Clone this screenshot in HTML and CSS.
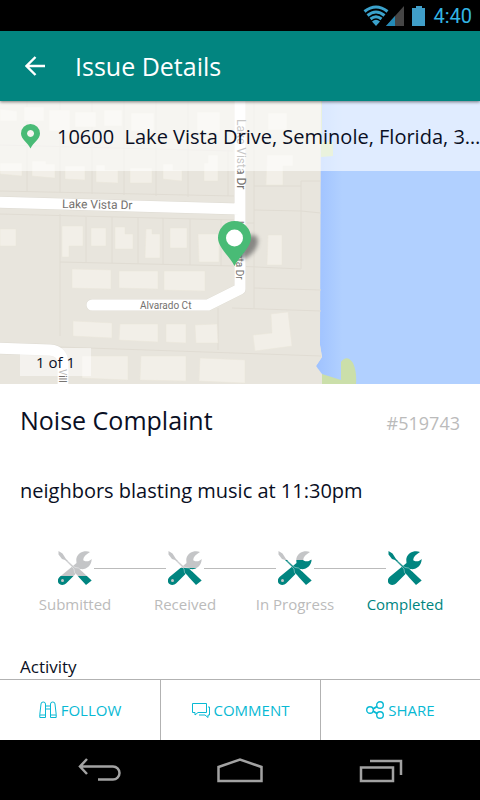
FILE: index.html
```html
<!DOCTYPE html>
<html lang="en">
<head>
<meta charset="utf-8">
<meta name="viewport" content="width=device-width, initial-scale=1">
<title>Issue Details</title>
<link rel="stylesheet" href="styles.css">
</head>
<body>
<svg class="defs" aria-hidden="true">
  <defs>
    <linearGradient id="level-1" gradientUnits="userSpaceOnUse" x1="0" y1="0" x2="0" y2="34"><stop offset=".74" stop-color="#c4c5c7"/><stop offset=".74" stop-color="#008580"/></linearGradient>
    <linearGradient id="level-2" gradientUnits="userSpaceOnUse" x1="0" y1="0" x2="0" y2="34"><stop offset=".51" stop-color="#c4c5c7"/><stop offset=".51" stop-color="#008580"/></linearGradient>
    <linearGradient id="level-3" gradientUnits="userSpaceOnUse" x1="0" y1="0" x2="0" y2="34"><stop offset=".26" stop-color="#c4c5c7"/><stop offset=".26" stop-color="#008580"/></linearGradient>
    <g id="tools">
      <path d="M32 1C26-1 20 2 18.500 7C18 9 18.500 10.500 18.500 12L1.500 26C-1 28.500-.5 31.500 1.500 33C3.500 34.500 6.500 34 8 32.500L22.500 18C28 19 33.500 15 33.700 8C31 10.500 29 11 25.500 9.500C24.500 7 27 4 32 1Z"/>
      <path d="M.5 0L4.500 2.500L8 8L17 16.500L20.500 17L33.700 29.500L28 34L16.500 21.500L16 18L7 9L4 8L.5 3.500Z"/>
      <path d="M8.500 10L16 18L16.500 21.500L20 25.500M10 10L17 16.500L20.500 17L24 20" fill="none" stroke="#fff" stroke-width=".6" stroke-opacity=".7"/>
    </g>
  </defs>
</svg>

<div class="status-bar">
  <svg width="42" height="22" viewBox="0 0 42 22" aria-hidden="true">
    <g fill="none" stroke="#3ba2cc" stroke-width="3"><path d="M1.500 6.500Q13-2.500 24.500 6.500M4.500 10.500Q13 3.500 21.500 10.500M7.500 14Q13 9.500 18.500 14"/></g>
    <path d="M9 16.500Q13 13 17 16.500L13 21Z" fill="#3ba2cc"/>
    <path d="M41 1V21H23Z" fill="#464646"/><path d="M32 11V21H23Z" fill="#248bb8"/>
  </svg>
  <svg width="14" height="22" viewBox="0 0 14 22" aria-hidden="true"><path d="M4 1H10V3H13V21H0V3H4Z" fill="#409ec8"/></svg>
  <time>4:40</time>
</div>

<header class="app-bar">
  <button type="button" class="back" aria-label="Back">
    <svg width="20" height="20" viewBox="0 0 20 20" aria-hidden="true"><path d="M10.500 1L1.500 10L10.500 19M2 10H20" fill="none" stroke="#fff" stroke-width="2.400"/></svg>
  </button>
  <h1>Issue Details</h1>
</header>

<main>
  <section class="map" aria-label="Map">
    <svg class="map-art" viewBox="0 101 480 283" preserveAspectRatio="xMidYMid slice" aria-hidden="true">
      <defs>
        <filter id="soft" x="-50%" y="-50%" width="200%" height="200%"><feGaussianBlur stdDeviation="2"/></filter>
        <linearGradient id="shore"><stop offset="0" stop-color="#9fc2ff"/><stop offset=".16" stop-color="#b1d0ff"/></linearGradient>
      </defs>
      <path fill="#e8e5dd" d="M0 101H480V384H0Z"/>
      <path fill="url(#shore)" d="M321 101H480V384H322L316 366L322 357L320 345Z"/>
      <path fill="#cbdfaa" d="M321 101h1v41h11v14l-12 1zM322 374L341 380V362Q347 354 353 363Q357 372 356 384H322Z"/>
      <path fill="#e8e5dd" d="M300 345H320L322 357L316 366L322 374V384H300Z"/>
      <g fill="none" stroke="#e0dcd3" stroke-width="1">
        <path d="M0 145L233 151M27 101V192M60 101V193M92 101V194M124 101V195M156 101V196M188 101V197M228 150V196M0 191L234 196"/>
        <path d="M0 214L234 220M60 214V336M86 217V262M112 217V263M138 218V264M163 218V264M190 219V265M221 219V266M60 262L235 266L301 269"/>
        <path d="M254 101V308M254 210L301 211L321 213M301 181H321M301 181V269M254 288L321 290M232 308L321 311M218 308V350M60 347L321 356M247 223H254M254 186H301"/>
      </g>
      <g fill="#f2efe8" stroke="#eae6db" stroke-width=".5">
        <path d="M0 109l17 2v10H0zM24 107h20v14H24zM49 110h21v21H49zM75 112h21v15H75zM104 110h18v16h-18zM131 113h23v18h-23zM197 112h23v20h-23zM268 113h19v17h-19z"/>
        <path d="M0 163h22v13l-22-2zM32 161h14v3h9v14l-23-2zM65 166h20v14l-20-1zM96 165h9v5h13v13l-22-1zM130 168h22v15h-22zM163 164h10v6h9v11l-19-2zM208 155h10v26h-14v-18h4z"/>
        <path d="M0 229h16v17H0zM62 226h21v20H69v11h-7zM91 228h15v18H91zM115 227h10v7h8v15h-18zM146 229h6v5h8v24h-15zM170 228h17v20h-17zM198 234h21v28h-20z"/>
        <path d="M72 269l39 1v19l-39-1zM119 271h39v18l-39-1zM164 271h41v20l-41-1zM73 321l39 2v15l-39-2zM120 324h38v18l-39-2zM166 324h20v19l-20-1zM195 325l22-1 1 19h-22zM82 356h46v24l-46-2zM141 356h45v25l-46-1zM200 358l45 2v23l-46-2z"/>
        <path d="M267 155h26v11h-10v19h-17zM268 235h14v30h-15zM271 314l17-2 4 34-37 5-2-16 19-2z"/>
      </g>
      <g fill="none" stroke="#dedbd3" stroke-linejoin="round" stroke-linecap="round">
        <path stroke-width="12" d="M240 95V289L208 305H92M-10 202L239 209M-10 348L50 350Q63 351 63 364V394"/>
        <path stroke="#fff" stroke-width="11" d="M240 95V289L208 305H92M-10 202L239 209M-10 348L50 350Q63 351 63 364V394"/>
      </g>
      <g class="street">
        <text x="62" y="208" transform="rotate(1 62 208)">Lake Vista Dr</text>
        <text class="street-small" x="140" y="309">Alvarado Ct</text>
        <text transform="translate(237 119) rotate(90)">Lake Vista Dr</text>
        <text transform="translate(236 221) rotate(90)" class="street-small">Lake Vista Dr</text>
        <text transform="translate(59 369) rotate(90)" class="street-small">Vill</text>
      </g>
      <ellipse cx="247" cy="247" rx="8" ry="14" transform="rotate(40 247 247)" fill="#555" opacity=".65" filter="url(#soft)"/>
      <path fill="#49bb76" d="M234.500 266C230 257 218 247 218 238A16.500 17 0 0 1 251 238C251 247 239 257 234.500 266Z"/>
      <circle cx="234.500" cy="238" r="8.500" fill="#fff"/>
    </svg>
    <div class="address">
      <svg width="19" height="25" viewBox="0 0 19 25" aria-hidden="true"><path fill="#49bb76" fill-rule="evenodd" d="M9.500 24.500C7 19 0 15 0 9.500A9.500 9.500 0 0 1 19 9.500C19 15 12 19 9.500 24.500ZM9.500 6A3.500 3.500 0 1 0 9.600 6Z"/></svg>
      <span class="address-text">10600&nbsp; Lake Vista Drive, Seminole, Florida, 3…</span>
    </div>
    <span class="counter">1 of 1</span>
  </section>

  <article class="issue">
    <div class="issue-head">
      <h2>Noise Complaint</h2>
      <span class="number">#519743</span>
    </div>
    <p class="description">neighbors blasting music at 11:30pm</p>
    <ol class="steps">
      <li><div class="track"><svg class="tool" viewBox="0 0 34 34" aria-hidden="true"><use href="#tools" fill="url(#level-1)"/><circle cx="4.500" cy="29.500" r="1.500" fill="#c4c5c7"/></svg></div>Submitted</li>
      <li><div class="track"><svg class="tool" viewBox="0 0 34 34" aria-hidden="true"><use href="#tools" fill="url(#level-2)"/><circle cx="4.500" cy="29.500" r="1.500" fill="#c4c5c7"/></svg></div>Received</li>
      <li><div class="track"><svg class="tool" viewBox="0 0 34 34" aria-hidden="true"><use href="#tools" fill="url(#level-3)"/><circle cx="4.500" cy="29.500" r="1.500" fill="#c4c5c7"/></svg></div>In Progress</li>
      <li class="current" aria-current="step"><div class="track"><svg class="tool" viewBox="0 0 34 34" aria-hidden="true"><use href="#tools" fill="#008580"/></svg></div>Completed</li>
    </ol>
    <h3>Activity</h3>
  </article>
</main>

<div class="actions">
  <button type="button">
    <svg width="18" height="18" viewBox="0 0 18 18" aria-hidden="true"><path d="M.8 13.500L2 3Q2 1 4.200 1Q6.500 1 6.500 3V16.500H.8ZM17.200 13.500L16 3Q16 1 13.800 1Q11.500 1 11.500 3V16.500H17.200ZM.8 14H6.500M11.500 14H17.200M6.500 5H11.500M6.500 8H11.500" fill="none" stroke="#08b9d4"/></svg>
    FOLLOW
  </button>
  <button type="button">
    <svg width="18" height="18" viewBox="0 0 18 18" aria-hidden="true"><path d="M.5 2.500H14.500V11.500H6L3 14V11.500H.5ZM16 6H17.500V14H16V16.500L13 14H7" fill="none" stroke="#08b9d4"/></svg>
    COMMENT
  </button>
  <button type="button">
    <svg width="18" height="18" viewBox="0 0 18 18" aria-hidden="true"><g fill="none" stroke="#08b9d4" stroke-width="1.400"><circle cx="4" cy="9" r="3.300"/><circle cx="14" cy="4" r="3.300"/><circle cx="14" cy="14" r="3.300"/><path stroke-width="2" d="M7 8L11 5.500M7 10L11 12.500"/></g></svg>
    SHARE
  </button>
</div>

<nav class="system-nav" aria-label="System">
  <button type="button" aria-label="Back"><svg width="46" height="26" viewBox="0 0 46 26" aria-hidden="true"><path d="M10 2L3 9.500L10 17M4 9.500H36A6 6 0 0 1 36 22.500H21" fill="none" stroke="#a2a2a2" stroke-width="2.500"/></svg></button>
  <button type="button" aria-label="Home"><svg width="46" height="26" viewBox="0 0 46 26" aria-hidden="true"><path d="M1.500 10L23 2.500L44.500 10V24H1.500Z" fill="none" stroke="#a2a2a2" stroke-width="2.500"/></svg></button>
  <button type="button" aria-label="Recent apps"><svg width="46" height="26" viewBox="0 0 46 26" aria-hidden="true"><path d="M4 10.500H36V24H4ZM13 4H44V18" fill="none" stroke="#a2a2a2" stroke-width="2.500"/></svg></button>
</nav>
</body>
</html>
```
FILE: styles.css
```css
* {
  box-sizing: border-box;
}

body {
  margin: 0;
  height: 100vh;
  display: flex;
  flex-direction: column;
  background: #fff;
  color: #0a0f24;
  font-family: "Open Sans", "Noto Sans", sans-serif;
}

h1, h2, h3, p, ol {
  margin: 0;
  padding: 0;
  font-weight: 400;
}

button {
  margin: 0;
  padding: 0;
  border: 0;
  background: none;
  font: inherit;
  color: inherit;
}

svg {
  display: block;
  flex: none;
}

.defs {
  position: absolute;
  width: 0;
  height: 0;
}

.status-bar {
  display: flex;
  flex: none;
  align-items: center;
  justify-content: flex-end;
  gap: 7px;
  height: 31px;
  padding-right: 8px;
  background: #000;
  color: #33b5e5;
  font-family: Roboto, sans-serif;
  font-size: 20px;
}

.app-bar {
  position: relative;
  z-index: 1;
  display: flex;
  flex: none;
  align-items: center;
  gap: 30px;
  height: 70px;
  padding: 0 25px;
  background: #028580;
  color: #fff;
  box-shadow: 0 1px 3px rgba(0, 0, 0, .5);
}

h1 {
  font-size: 25px;
  line-height: 34px;
}

main {
  flex: 1;
  min-height: 0;
  overflow: hidden;
}

.map {
  position: relative;
  height: 283px;
}

.map-art {
  width: 100%;
  height: 100%;
}

.street {
  fill: #74716e;
  font-family: Roboto, sans-serif;
  font-size: 12px;
}

.street-small {
  font-size: 10px;
}

.address {
  position: absolute;
  top: 0;
  left: 0;
  right: 0;
  display: flex;
  align-items: center;
  gap: 17px;
  height: 70px;
  padding-left: 21px;
  background: rgba(255, 255, 255, .6);
  font-size: 20px;
}

.address-text {
  white-space: nowrap;
}

.counter {
  position: absolute;
  left: 20px;
  bottom: 8px;
  padding: 0 16px;
  background: rgba(255, 255, 255, .5);
  font-size: 15px;
  line-height: 28px;
}

.issue {
  padding: 19px 20px;
}

.issue-head {
  display: flex;
  align-items: baseline;
  justify-content: space-between;
}

h2 {
  font-size: 25px;
  line-height: 34px;
}

.number {
  color: #bbb;
  font-size: 18px;
}

.description {
  margin-top: 40px;
  font-size: 20px;
  line-height: 28px;
}

.steps {
  display: grid;
  grid-template-columns: repeat(4, 1fr);
  margin-top: 46px;
  list-style: none;
  color: #bbb;
  font-size: 15px;
  line-height: 20px;
  text-align: center;
}

.track {
  display: flex;
  align-items: center;
  gap: 2px;
  margin-bottom: 9px;
}

.track::before,
.track::after {
  content: "";
  flex: 1;
  height: 1px;
  background: #bbb;
}

.steps li:first-child .track::before,
.steps li:last-child .track::after {
  background: none;
}

.tool {
  width: 34px;
  height: 34px;
}

.current {
  color: #008580;
}

h3 {
  margin-top: 41px;
  font-size: 17px;
  line-height: 24px;
}

.actions {
  display: grid;
  flex: none;
  grid-template-columns: repeat(3, 1fr);
  height: 61px;
  border-top: 1px solid #b2b2b2;
  background: #fff;
  color: #08b9d4;
  font-size: 15px;
}

.actions button {
  display: flex;
  align-items: center;
  justify-content: center;
  gap: 4px;
}

.actions button + button {
  border-left: 1px solid #b2b2b2;
}

.system-nav {
  display: flex;
  flex: none;
  align-items: center;
  justify-content: center;
  gap: 94px;
  height: 60px;
  background: #000;
}
```
